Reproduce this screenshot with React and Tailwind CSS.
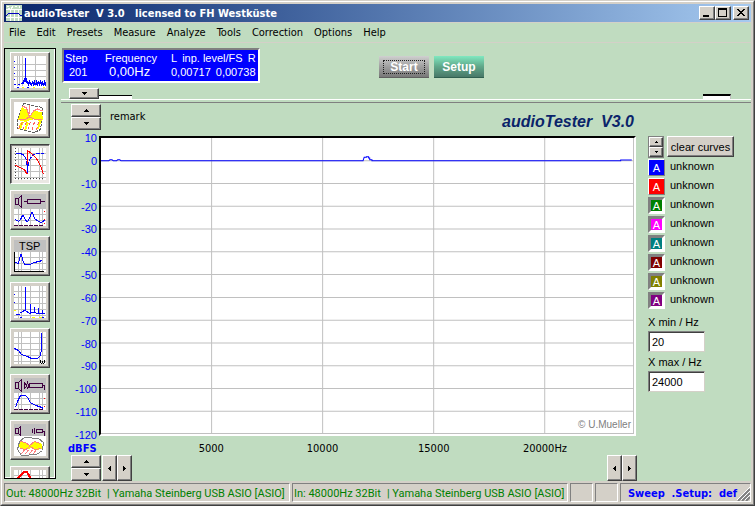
import React from 'react';

const tahoma = "font-['DejaVu_Sans_Condensed','DejaVu_Sans',sans-serif]";
const raised =
  'border border-t-white border-l-white border-r-[#404040] border-b-[#404040] bg-[#d4d0c8] shadow-[inset_-1px_-1px_0_#808080]';

function Arrow({ dir, small }) {
  const shapes = {
    up: 'M3 0h1v1h1v1h1v1h-5v-1h1v-1h1z',
    down: 'M1 0h5v1h-1v1h-1v1h-1v-1h-1v-1h-1z',
    left: 'M2 3h1v-1h1v-1h1v5h-1v-1h-1v-1h-1z',
    right: 'M2 1h1v1h1v1h1v1h-1v1h-1v1h-1z',
  };
  const vertical = dir === 'up' || dir === 'down';
  return (
    <svg
      className={small ? 'w-[5px] h-[2px]' : vertical ? 'w-[7px] h-[3px]' : 'w-[7px] h-[7px]'}
      viewBox={vertical ? '0 0 7 3' : '0 0 7 7'}
      shapeRendering="crispEdges"
    >
      <path d={shapes[dir]} />
    </svg>
  );
}

function Spin({ dir, label, className, small }) {
  return (
    <button aria-label={label} className={`flex items-center justify-center ${raised} ${className}`}>
      <Arrow dir={dir} small={small} />
    </button>
  );
}

const Speaker = () => <path d="M1.5 4.500h3v6h-3zM4.500 4.500l3-3v12l-3-3" fill="none" stroke="#400040" />;

function Grid({ y = 0, h = 32 }) {
  const rows = [];
  for (let r = y + 5; r < y + h; r += 6) rows.push(r);
  return (
    <>
      <rect x="0" y={y} width="32" height={h} fill="#fff" />
      <path d={`M4.5 ${y}v${h}M7.5 ${y}v${h}M16.5 ${y}v${h}M25.5 ${y}v${h}M28.5 ${y}v${h}`} stroke="#c0c0c0" />
      {rows.map((r) => (
        <path key={r} d={`M0 ${r + 0.5}h32`} stroke="#c0c0c0" />
      ))}
    </>
  );
}

const icons = [
  {
    name: 'Spectrum',
    art: (
      <>
        <rect width="32" height="32" fill="#fff" />
        <path d="M3.5 0v30M5.5 0v30M8.5 0v30M21.5 0v30M0 8.5h32M0 14.5h32M0 20.5h32" stroke="#c0c0c0" />
        <path d="M0 5.500h1M0 11.500h1M0 17.500h1M0 23.500h1M0 28.500h2M3 31.500h2M13 31.500h2" stroke="#0000ff" />
        <path
          d="M3.5 28.500h2M6.500 27.500h2M8.500 25.500v2M9.500 24v4M10.500 22v4M11.500 2v24M12.500 22v5M13.500 25v3M14.500 26v4M15.500 24v4M16.500 26v3M17.500 27v3M18.500 25v3M19.500 26v4M20.500 24v5M21.500 27v2M22.500 24v5M23.500 26v4M24.500 25v3M25.500 26v4M26.500 24v4M27.500 26v4M28.500 25v4M29.500 27v3M30.500 24v5M31.500 26v4"
          stroke="#0000ff"
        />
        <path d="M8 31.500h2M19 31.500h2M29 31.500h2" stroke="#ffff00" />
      </>
    ),
  },
  {
    name: 'Waterfall',
    art: (
      <>
        <rect width="32" height="32" fill="#fff" />
        <path d="M9.500 1.500L28.500 5.500V13.500L26.500 27.500L20.500 30.500L3.500 26.500L3.500 18.500L6.500 9.500Z" fill="#fff" stroke="#606060" strokeDasharray="3 1" />
        <path d="M8 5l5 3l3 6l4-5l8 1l1 7l-2 3l-6-3l-5 1l-4 2l-8-2l2-7z" fill="#ffff00" />
        <path d="M8.500 4l4 2l2 6l1 3l4-6l4-2l5 2M15.500 3v9M4.500 17.500h7l4-3l5 3h7" fill="none" stroke="#ff8080" />
        <path d="M7 20l-3 7h3l3-7zM13 20l-3 8h2l3-7zM25 19l-2 8h2l2-7z" fill="#ffff00" />
        <path d="M8.500 20l-4 7M12.500 20l-4 8M16.500 20l-3 8M20.500 20l-3 9M24.500 20l-2 8" stroke="#ff6060" strokeDasharray="3 2" />
      </>
    ),
  },
  {
    name: 'Frequency response',
    active: true,
    art: (
      <>
        <Grid />
        <path d="M1.500 5.500h5l4 2l2 5l1 10v-2l2-9l3-4l3-2h8" fill="none" stroke="#0000ff" strokeDasharray="4 1" />
        <path d="M1.500 17.500l9 4l2 4h1V2.500l4 3l5 5l4 7l3 9" fill="none" stroke="#ff0000" />
        <path d="M13.500 16v9" stroke="#0000ff" />
        <path d="M1.500 0v30.500h28" fill="none" stroke="#404040" strokeDasharray="1 2" />
      </>
    ),
  },
  {
    name: 'Loudspeaker impedance',
    art: (
      <>
        <rect width="32" height="15" fill="#c0c0c0" />
        <Speaker />
        <path d="M10 7.500h4M26 7.500h5M13.500 5.500h13v4h-13z" fill="none" stroke="#400040" />
        <Grid y={15} h={17} />
        <path d="M1.500 25.500l3 2l2-2l2-4h1l2 5l2 1l2-3l2-6h1l2 6l4 3l3 1l4-3" fill="none" stroke="#0000ff" />
        <path d="M0 31.500h30" stroke="#400040" strokeDasharray="4 1" />
        <path d="M30 17.500h1M30 25.500h1M30 29.500h1" stroke="#f00" />
      </>
    ),
  },
  {
    name: 'TSP measurement',
    art: (
      <>
        <rect width="32" height="32" fill="#c0c0c0" />
        <text x="5" y="10" fontSize="11" fontFamily="'Liberation Sans', Arial, sans-serif">TSP</text>
        <Grid y={12} h={20} />
        <path d="M1.500 22.500l3 1l1-4l1-5h1l1 5l2 5h5l5-2l8-2" fill="none" stroke="#0000ff" />
        <path d="M.5 12v19.500h29" fill="none" stroke="#000" />
      </>
    ),
  },
  {
    name: 'Distortion',
    art: (
      <>
        <Grid />
        <path d="M2 28.500h4M6 26.500h2M8 25.500h2M9 24.500h2M11.500 1v24M12 25.500h2M13 26.500h2M15 27.500h2M16.500 18v9M20.500 21v6M17 26.500h5M22 27.500h9M24.500 22v6M28.500 24v4" fill="none" stroke="#0000ff" />
        <path d="M0 8.500h1M0 16.500h1M6 31.500h2M28 31.500h2" stroke="#0000ff" />
        <path d="M0 24.500h2M18 31.500h3M25 31.500h3" stroke="#ffff00" />
      </>
    ),
  },
  {
    name: 'Angular frequency',
    art: (
      <>
        <Grid />
        <path d="M.5 16.500l4 2l3 4l6 2l4 2h6l3-3l1-7V1" fill="none" stroke="#0000ff" />
        <path d="M26 28h1v3h1v-2h1v2h1v-3h1v3h-1v1h-1v-1h-1v1h-1v-1h-1z" />
      </>
    ),
  },
  {
    name: 'Acoustic response',
    art: (
      <>
        <rect width="32" height="15" fill="#c0c0c0" />
        <Speaker />
        <path d="M10.500 4v7M11.500 5.500l1 2l-1 3M13.500 3.500l1 4l-1 4M15.500 5.500h13v4h-13zM28.500 7.500h2v4" fill="none" stroke="#400040" />
        <Grid y={15} h={17} />
        <path d="M1.500 29.500l2-6l3-6h5l2 2l3 5l5 3l4 1l4 2" fill="none" stroke="#0000ff" />
        <path d="M0 31.500h30" stroke="#400040" strokeDasharray="4 1" />
        <path d="M30 20.500h1M30 28.500h1" stroke="#f00" />
      </>
    ),
  },
  {
    name: 'Acoustic waterfall',
    art: (
      <>
        <rect width="32" height="14" fill="#c0c0c0" />
        <path d="M1.500 4.500h3v5h-3zM4.500 4.500l2-2v9l-2-2M18.500 5v4M20.500 4v6M22.500 5.500h6v3h-6zM28.500 7.500h2v4" fill="none" stroke="#400040" />
        <rect y="12" width="32" height="20" fill="#fff" />
        <path d="M3.500 25.500l2-8l5-4l14 1l5 4l-1 8l-6 4l-15 1z" fill="#fff" stroke="#808080" />
        <path d="M6 17l5 1l5 3l5-4l7 3v5l-6 1l-5-2l-6 2l-6-3z" fill="#ffff00" />
        <path d="M6.500 17.500l5 1l4 3l5-4l6 2M6 24.500l6 1l4-3l5 3l6-1M10.500 26l-3 4M14.500 26l-3 4M18.500 26l-3 4M22.500 25l-3 5" fill="none" stroke="#ff8080" />
      </>
    ),
  },
  {
    name: 'Response overlay',
    art: (
      <>
        <Grid />
        <path d="M2.500 10.500l3-4l2-2l3-3h2l2 3l2 4l2 6" fill="none" stroke="#ff0000" strokeWidth="2" />
      </>
    ),
  },
];

const menus = ['File', 'Edit', 'Presets', 'Measure', 'Analyze', 'Tools', 'Correction', 'Options', 'Help'];
const levels = [10, 0, -10, -20, -30, -40, -50, -60, -70, -80, -90, -100, -110, -120];
const curves = [
  { color: 'bg-[#0000ff]', on: true },
  { color: 'bg-[#ff0000]', on: true },
  { color: 'bg-[#008000]' },
  { color: 'bg-[#ff00ff]' },
  { color: 'bg-[#008080]' },
  { color: 'bg-[#800000]' },
  { color: 'bg-[#808000]' },
  { color: 'bg-[#800080]' },
];

function TitleBar() {
  const btn = `flex h-[14px] w-4 items-center justify-center ${raised}`;
  return (
    <header className="flex h-[18px] shrink-0 items-center bg-linear-to-r from-[#0a246a] to-[#a6caf0] pr-[2px] pl-[2px]">
      <svg className="h-4 w-4" viewBox="0 0 16 16" shapeRendering="crispEdges">
        <rect width="16" height="16" fill="#c0dcc0" />
        <path d="M0 4.500h16M0 12.500h16M4.500 5v11M8.500 5v11M12.500 5v11" stroke="#fff" />
        <path d="M1 1.500h2M2 3.500h2M5 3.500l2-2M9 1.500h2M13.500 1v2" stroke="#fff" fill="none" />
        <path d="M0 10.500h1M1 9.500h1M2 8.500h11M13 9.500h1M14 10.500h2" fill="none" stroke="#0000c0" />
      </svg>
      <h1 className="ml-[2px] flex-1 pt-px text-[11px] leading-4 font-bold whitespace-pre text-white">
        {'audioTester  V 3.0   licensed to FH Westküste'}
      </h1>
      <button aria-label="Minimize" className={btn}>
        <svg className="h-[10px] w-3" viewBox="0 0 12 10" shapeRendering="crispEdges"><path d="M2 7h6v2H2z" /></svg>
      </button>
      <button aria-label="Maximize" className={btn}>
        <svg className="h-[10px] w-3" viewBox="0 0 12 10" shapeRendering="crispEdges"><path d="M1 0h9v9H1zM2 2v6h7V2z" fillRule="evenodd" /></svg>
      </button>
      <button aria-label="Close" className={`ml-[2px] ${btn}`}>
        <svg className="h-[10px] w-3" viewBox="0 0 12 10" shapeRendering="crispEdges">
          <path d="M2 1h2v1h1v1h2V2h1V1h2v1H9v1H8v1H7v1h1v1h1v1h1v1H8V7H7V6H5v1H4v1H2V7h1V6h1V5h1V4H4V3H3V2H2z" />
        </svg>
      </button>
    </header>
  );
}

function Toolbar() {
  return (
    <aside className="mt-[5px] mb-[2px] flex w-[52px] shrink-0 flex-col gap-[6px] overflow-hidden border border-black pt-[3px] pl-[5px] shadow-[inset_0_-1px_0_#fff,inset_-1px_0_0_#fff]">
      {icons.map((icon) => (
        <button
          key={icon.name}
          aria-label={icon.name}
          className={`flex h-10 w-10 shrink-0 items-center justify-center border ${
            icon.active
              ? 'border-t-[#404040] border-r-white border-b-white border-l-[#404040] bg-[#eae8e3] shadow-[inset_1px_1px_0_#808080]'
              : 'border-t-white border-r-[#404040] border-b-[#404040] border-l-white bg-[#d4d0c8] shadow-[inset_-1px_-1px_0_#808080]'
          }`}
        >
          <svg className="h-8 w-8" viewBox="0 0 32 32" shapeRendering="crispEdges">{icon.art}</svg>
        </button>
      ))}
    </aside>
  );
}

function Readout() {
  return (
    <div className="flex h-[35px] w-[198px] border-2 border-t-[#808080] border-r-white border-b-white border-l-[#808080] bg-[#0000ff] pt-px text-[11px] leading-[14px] whitespace-pre text-white">
      <div className="w-[41px] pl-px"><div>Step</div><div className="pl-1">201</div></div>
      <div className="w-[66px]"><div>Frequency</div><div className="pl-1 text-[13px]">0,00Hz</div></div>
      <div className="flex-1">
        <div className="flex gap-[5px]"><span>L</span><span>inp. level/FS</span><span>R</span></div>
        <div className="flex gap-[5px]"><span>0,00717</span><span>0,00738</span></div>
      </div>
    </div>
  );
}

function Plot() {
  return (
    <div className="relative min-h-0 flex-1 border-2 border-t-black border-r-white border-b-white border-l-black bg-white">
      <svg className="block h-full w-full" viewBox="0 0 24000 130" preserveAspectRatio="none" shapeRendering="crispEdges">
        {levels.slice(1).map((v) => (
          <path key={v} d={`M0 ${v === -120 ? 129.8 : 10 - v}H24000`} stroke="#c0c0c0" vectorEffect="non-scaling-stroke" />
        ))}
        {[4980, 9980, 14980, 19980, 23980].map((f) => (
          <path key={f} d={`M${f} 0V130`} stroke="#c0c0c0" vectorEffect="non-scaling-stroke" />
        ))}
        <path
          d="M0 10H350L400 9.600H500L550 10H700L750 9.600H850L900 10H11800L11850 8.500H11950V8.200H12050V8.800H12100V9.500H12200V10H23400V9.700H23900"
          fill="none"
          stroke="#0000ff"
          vectorEffect="non-scaling-stroke"
        />
      </svg>
      <span className="absolute right-[3px] bottom-px text-[10px] leading-4 text-[#808080]">© U.Mueller</span>
    </div>
  );
}

function RangeField({ id, label, value }) {
  return (
    <div className="flex flex-col">
      <label htmlFor={id} className="leading-[18px]">{label}</label>
      <input
        id={id}
        defaultValue={value}
        className="h-[21px] w-[57px] border border-t-[#808080] border-r-[#d4d0c8] border-b-[#d4d0c8] border-l-[#808080] bg-white pl-[3px] text-[11px] shadow-[inset_1px_1px_0_#404040] outline-none"
      />
    </div>
  );
}

function CurvePanel() {
  return (
    <section className="flex w-[103px] shrink-0 flex-col pt-[33px]">
      <div className="flex gap-[3px]">
        <div className="flex w-4 flex-col border border-[#808080]">
          <Spin dir="up" label="Next curve set" small className="h-[10px]" />
          <Spin dir="down" label="Previous curve set" small className="h-[10px]" />
        </div>
        <button className={`h-[21px] w-[67px] text-[11px] leading-4 ${raised}`}>clear curves</button>
      </div>
      <ul className="mt-px flex flex-col gap-[2px]">
        {curves.map((c) => (
          <li key={c.color} className="flex gap-[5px] leading-[15px]">
            <button
              aria-pressed={!!c.on}
              className={`h-[17px] w-[17px] text-center text-[11px] text-white ${c.color} ${
                c.on
                  ? 'border border-t-white border-r-[#808080] border-b-[#808080] border-l-white leading-[16px]'
                  : 'border-3 border-t-[#808080] border-r-white border-b-white border-l-[#808080] leading-[12px]'
              }`}
            >
              A
            </button>
            <span>unknown</span>
          </li>
        ))}
      </ul>
      <div className="mt-1 flex flex-col gap-px">
        <RangeField id="xmin" label="X min / Hz" value="20" />
        <RangeField id="xmax" label="X max / Hz" value="24000" />
      </div>
    </section>
  );
}

function StatusBar() {
  const cell = 'h-[19px] border border-t-[#808080] border-r-white border-b-white border-l-[#808080] whitespace-pre leading-[19px]';
  return (
    <footer className="flex h-[21px] shrink-0 items-end gap-[2px] bg-[#d4d0c8] text-[11px] text-[#008000]">
      <div className={`flex w-[286px] gap-[6px] pl-px font-['Roboto',sans-serif] ${cell}`}>
        <span>Out: 48000Hz 32Bit</span><span>| Yamaha Steinberg USB ASIO [ASIO]</span>
      </div>
      <div className={`flex w-[276px] gap-[6px] pl-px font-['Roboto',sans-serif] ${cell}`}>
        <span>In: 48000Hz 32Bit</span><span>| Yamaha Steinberg USB ASIO [ASIO]</span>
      </div>
      <div className={`w-[23px] ${cell}`} />
      <div className={`w-[23px] ${cell}`} />
      <div className={`flex flex-1 pl-[7px] font-bold text-[#0000ff] ${cell}`}>
        <span>{'Sweep  .Setup:  def'}</span>
        <svg className="ml-auto h-[17px] w-[13px]" viewBox="0 0 13 17">
          <path d="M1 17L13 5M5 17L13 9M9 17L13 13" stroke="#808080" strokeWidth="2" />
          <path d="M0 16L13 3M4 16L13 7M8 16L13 11" stroke="#fff" />
        </svg>
      </div>
    </footer>
  );
}

export default function App() {
  return (
    <div className={`flex h-screen min-w-[700px] flex-col overflow-hidden border border-t-[#d4d0c8] border-r-[#404040] border-b-[#404040] border-l-[#d4d0c8] bg-[#d4d0c8] text-black ${tahoma}`}>
      <div className="flex min-h-0 flex-1 flex-col border border-t-white border-r-[#808080] border-b-[#808080] border-l-white p-[2px]">
        <TitleBar />
        <div className="flex min-h-0 flex-1 flex-col border-t border-[#d4d0c8] bg-[#c0dcc0]">
          <nav className="flex h-[20px] shrink-0 gap-[11px] border-b border-[#d4d0c8] pl-[5px] text-[11px] leading-[18px]">
            {menus.map((m) => (
              <button key={m}>{m}</button>
            ))}
          </nav>
          <div className="flex min-h-0 flex-1">
            <Toolbar />
            <main className="flex min-w-0 flex-1 flex-col pl-[5px] font-['Liberation_Sans',Arial,sans-serif] text-[11px]">
              <div className="flex h-[45px] shrink-0 items-start pt-[5px] pl-px">
                <Readout />
                <div className="ml-[119px] flex gap-[5px] pt-[8px] text-[12px] font-bold text-white">
                  <button className="h-[22px] w-[50px] border-b border-[#606060] bg-linear-to-b from-[#d0d0d0] via-[#a0a0a0] to-[#787878] px-1">
                    <span className="block border border-dotted border-[#202020] leading-3">Start</span>
                  </button>
                  <button className="h-[22px] w-[50px] border-b border-[#306050] bg-linear-to-b from-[#80e8c0] via-[#60a88a] to-[#487868]">Setup</button>
                </div>
              </div>
              <div className="flex h-[11px] shrink-0 items-end justify-between pr-5 pl-2">
                <div className="flex items-end">
                  <Spin dir="down" label="Frequency position" className="h-[11px] w-[30px]" />
                  <div className="h-[4px] w-[33px] border-t border-black bg-white" />
                </div>
                <div className="h-[5px] w-[28px] border-t-2 border-r border-t-black border-r-[#c0c0c0] bg-white" />
              </div>
              <div className="h-[4px] shrink-0 border-t border-b border-t-white border-b-[#808080]" />

              <div className="flex min-h-0 flex-1">
                <section className="flex min-w-0 flex-1 flex-col">
                  <div className="flex h-[33px] shrink-0 pt-px pl-[10px]">
                    <div className="flex w-[30px] flex-col">
                      <Spin dir="up" label="Raise upper level" className="h-[13px]" />
                      <Spin dir="down" label="Lower upper level" className="h-[13px]" />
                    </div>
                    <span className={`pl-[9px] text-[11px] leading-[25px] ${tahoma}`}>remark</span>
                    <h2 className="ml-auto pr-[14px] text-[16px] leading-[36px] font-bold whitespace-pre text-[#0a246a] italic">
                      {'audioTester  V3.0'}
                    </h2>
                  </div>
                  <div className="flex min-h-0 flex-1 pr-3">
                    <div className="-my-[5px] flex w-[38px] shrink-0 flex-col justify-between pt-px pr-[2px] text-right leading-3 text-[#0000ff]">
                      {levels.map((v) => (
                        <span key={v}>{v}</span>
                      ))}
                    </div>
                    <Plot />
                  </div>
                  <div className={`flex h-[19px] shrink-0 pr-[14px] text-[11px] leading-[25px] ${tahoma}`}>
                    <span className="w-[39px] pl-[7px] font-bold text-[#0000ff]">dBFS</span>
                    <div className="grid flex-1 grid-cols-48 text-center">
                      <span className="col-span-10 col-start-6">5000</span>
                      <span className="col-span-10">10000</span>
                      <span className="col-span-10">15000</span>
                      <span className="col-span-10">20000Hz</span>
                    </div>
                  </div>
                  <div className="flex h-[26px] shrink-0 pr-[11px] pl-[10px]">
                    <div className="flex w-[30px] flex-col">
                      <Spin dir="up" label="Raise lower level" className="h-[13px]" />
                      <Spin dir="down" label="Lower lower level" className="h-[13px]" />
                    </div>
                    <Spin dir="left" label="Decrease start" className="ml-px w-[15px]" />
                    <Spin dir="right" label="Increase start" className="w-[15px]" />
                    <Spin dir="left" label="Decrease end" className="ml-auto w-[15px]" />
                    <Spin dir="right" label="Increase end" className="w-[15px]" />
                  </div>
                </section>
                <CurvePanel />
              </div>
            </main>
          </div>
        </div>
        <StatusBar />
      </div>
    </div>
  );
}
